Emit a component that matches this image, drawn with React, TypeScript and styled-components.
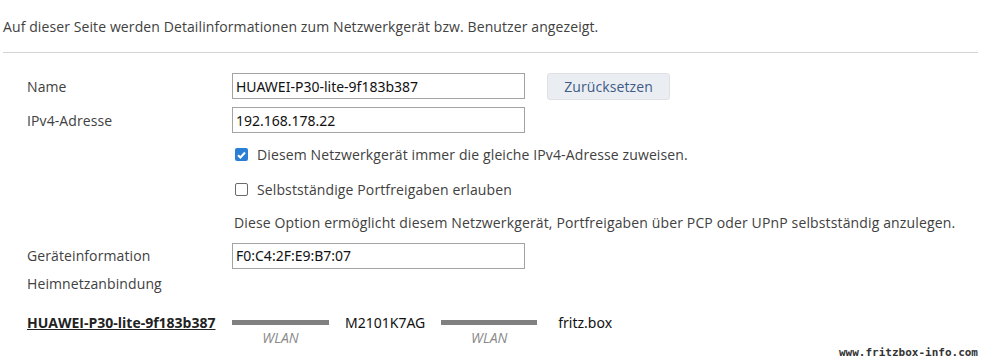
import React from "react";
import styled, { createGlobalStyle } from "styled-components";

const Global = createGlobalStyle`
  html, body { margin: 0; padding: 0; background: #fff; }
  body { font-family: "Open Sans", "Noto Sans", sans-serif; color: #444; }
`;

const Page = styled.div`
  width: 987px;
  height: 361px;
  box-sizing: border-box;
  padding: 0 9px 0 3px;
  display: flex;
  flex-direction: column;
  overflow: hidden;
  & > * { flex-shrink: 0; }
`;

const Intro = styled.p`
  margin: 0;
  height: 52px;
  display: flex;
  align-items: center;
  font-size: 14px;
  letter-spacing: 0.1px;
  color: #414141;
`;

const Rule = styled.div`
  height: 1px;
  background: #d4d4d4;
  width: 975px;
`;

const Form = styled.div`
  display: flex;
  flex-direction: column;
  padding-left: 24px;
  margin-top: 16px;
`;

const Row = styled.div<{ $h: number }>`
  display: grid;
  grid-template-columns: 205px 1fr;
  align-items: center;
  height: ${(p) => p.$h}px;
`;

const Label = styled.div`
  font-size: 14px;
  letter-spacing: 0.1px;
  color: #414141;
`;

const Field = styled.div`
  display: flex;
  align-items: center;
`;

const Input = styled.div`
  box-sizing: border-box;
  width: 293px;
  height: 26px;
  border: 1px solid #a3a3a3;
  padding: 0 3px;
  display: flex;
  align-items: center;
  font-family: "Noto Sans", sans-serif;
  font-size: 14px;
  color: #111;
`;

const Button = styled.div`
  box-sizing: border-box;
  margin-left: 22px;
  width: 123px;
  height: 27px;
  border: 1px solid #dde1e6;
  border-radius: 3px;
  background: #eaeef3;
  color: #3d5b86;
  font-size: 14px;
  letter-spacing: 0.1px;
  display: flex;
  align-items: center;
  justify-content: center;
`;

const Check = styled.span<{ $on?: boolean }>`
  box-sizing: border-box;
  width: 13px;
  height: 13px;
  margin-left: 3px;
  margin-right: 9px;
  border-radius: 2px;
  border: ${(p) => (p.$on ? "none" : "1.5px solid #6a6a6a")};
  background: ${(p) => (p.$on ? "#2a7fd4" : "#fff")};
  display: inline-flex;
  align-items: center;
  justify-content: center;
`;

const Text = styled.span`
  font-size: 14px;
  letter-spacing: 0.12px;
  color: #414141;
`;

const Note = styled.span`
  font-size: 14px;
  letter-spacing: 0.14px;
  color: #414141;
  padding-left: 2px;
`;

const Chain = styled.div`
  display: grid;
  grid-template-columns: 205px 97px auto 96px auto;
  grid-template-rows: 22px 14px;
  justify-content: start;
  align-items: center;
  margin-top: 17px;
`;

const Link = styled.a`
  font-size: 14px;
  font-weight: 700;
  color: #222;
  text-decoration: underline;
`;

const Bar = styled.div`
  height: 5px;
  background: #808080;
`;

const Node = styled.span<{ $ml: number; $mr: number }>`
  font-family: "Noto Sans", sans-serif;
  font-size: 14px;
  color: #111;
  margin: 0 ${(p) => p.$mr}px 0 ${(p) => p.$ml}px;
`;

const Medium = styled.span`
  font-style: italic;
  font-size: 14px;
  line-height: 14px;
  margin-top: -5px;
  color: #8a8a8a;
  text-align: center;
`;

const Footer = styled.div`
  margin-top: auto;
  padding-bottom: 3px;
  line-height: 12px;
  text-align: right;
  font-family: "DejaVu Sans Mono", monospace;
  font-weight: 700;
  font-size: 11px;
  color: #333;
`;

export default function App() {
  return (
    <>
      <Global />
      <Page>
        <Intro>Auf dieser Seite werden Detailinformationen zum Netzwerkgerät bzw. Benutzer angezeigt.</Intro>
        <Rule />
        <Form>
          <Row $h={34}>
            <Label>Name</Label>
            <Field>
              <Input>HUAWEI-P30-lite-9f183b387</Input>
              <Button>Zurücksetzen</Button>
            </Field>
          </Row>
          <Row $h={34}>
            <Label>IPv4-Adresse</Label>
            <Field>
              <Input>192.168.178.22</Input>
            </Field>
          </Row>
          <Row $h={35}>
            <span />
            <Field>
              <Check $on>
                <svg width="9" height="8" viewBox="0 0 9 8">
                  <path d="M1 4.2 L3.4 6.5 L8 1.5" fill="none" stroke="#fff" strokeWidth="2" />
                </svg>
              </Check>
              <Text>Diesem Netzwerkgerät immer die gleiche IPv4-Adresse zuweisen.</Text>
            </Field>
          </Row>
          <Row $h={34}>
            <span />
            <Field>
              <Check />
              <Text>Selbstständige Portfreigaben erlauben</Text>
            </Field>
          </Row>
          <Row $h={33}>
            <span />
            <Note>Diese Option ermöglicht diesem Netzwerkgerät, Portfreigaben über PCP oder UPnP selbstständig anzulegen.</Note>
          </Row>
          <Row $h={33}>
            <Label>Geräteinformation</Label>
            <Field>
              <Input>F0:C4:2F:E9:B7:07</Input>
            </Field>
          </Row>
          <Row $h={22}>
            <Label>Heimnetzanbindung</Label>
          </Row>
          <Chain>
            <Link>HUAWEI-P30-lite-9f183b387</Link>
            <Bar />
            <Node $ml={16} $mr={16}>M2101K7AG</Node>
            <Bar />
            <Node $ml={21} $mr={0}>fritz.box</Node>
            <span />
            <Medium>WLAN</Medium>
            <span />
            <Medium>WLAN</Medium>
          </Chain>
        </Form>
        <Footer>www.fritzbox-info.com</Footer>
      </Page>
    </>
  );
}
